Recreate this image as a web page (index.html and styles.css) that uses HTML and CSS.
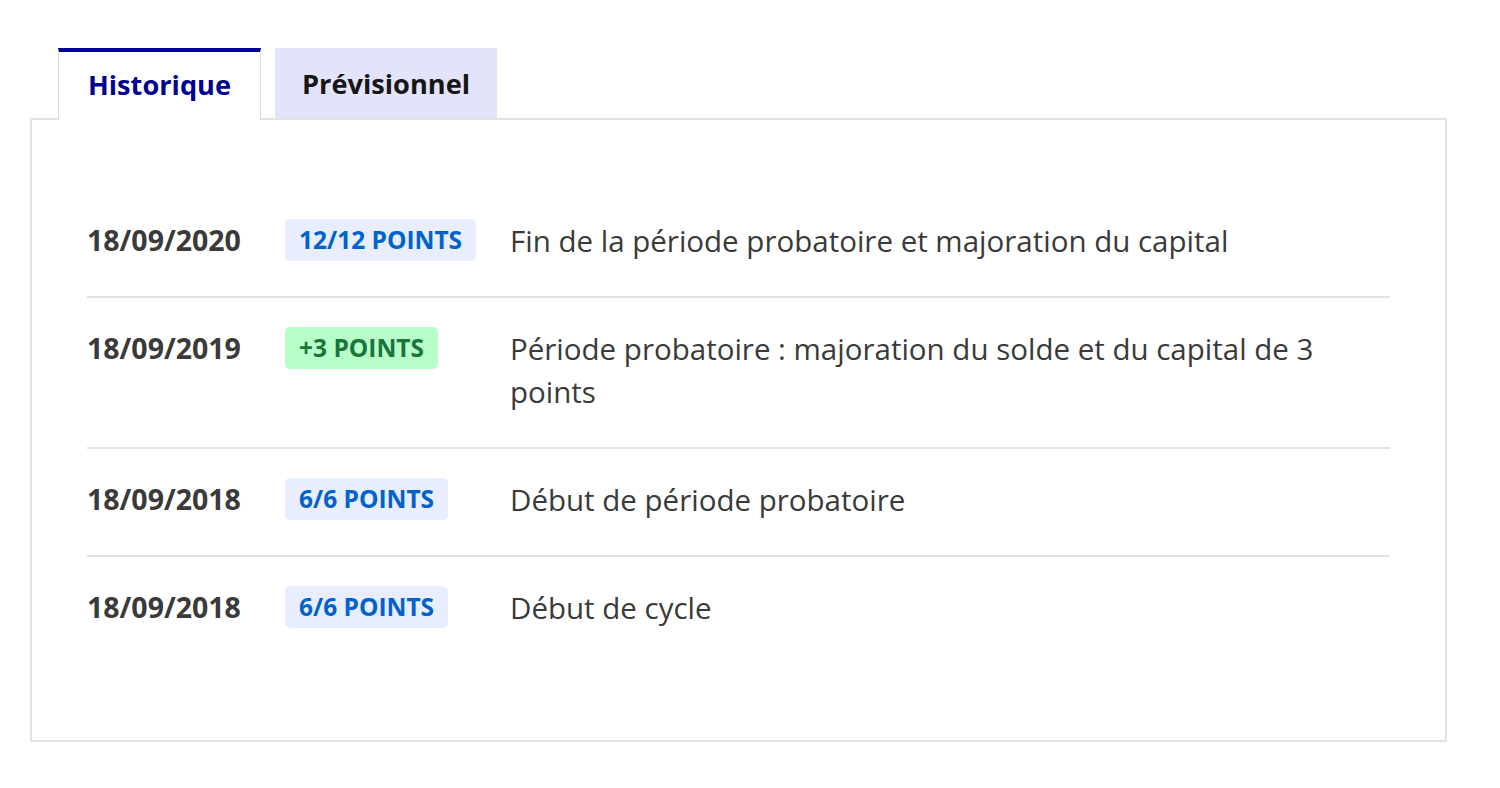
FILE: index.html
```html
<!DOCTYPE html>
<html lang="fr">
<head>
<meta charset="utf-8">
<title>Historique</title>
<link rel="stylesheet" href="styles.css">
</head>
<body>
<div class="tabs">
  <ul class="tab-list">
    <li><button class="tab tab-active">Historique</button></li>
    <li><button class="tab">Prévisionnel</button></li>
  </ul>
  <div class="panel">
    <div class="row">
      <div class="date">18/09/2020</div>
      <div class="badge-cell"><span class="badge badge-info">12/12 points</span></div>
      <div class="desc">Fin de la période probatoire et majoration du capital</div>
    </div>
    <div class="row">
      <div class="date">18/09/2019</div>
      <div class="badge-cell"><span class="badge badge-success">+3 points</span></div>
      <div class="desc">Période probatoire : majoration du solde et du capital de 3 points</div>
    </div>
    <div class="row">
      <div class="date">18/09/2018</div>
      <div class="badge-cell"><span class="badge badge-info">6/6 points</span></div>
      <div class="desc">Début de période probatoire</div>
    </div>
    <div class="row">
      <div class="date">18/09/2018</div>
      <div class="badge-cell"><span class="badge badge-info">6/6 points</span></div>
      <div class="desc">Début de cycle</div>
    </div>
  </div>
</div>
</body>
</html>
```
FILE: styles.css
```css
html, body {
  margin: 0;
  padding: 0;
  background: #ffffff;
}
body {
  font-family: "Open Sans", "Liberation Sans", sans-serif;
  color: #3a3a3a;
}
.tabs {
  padding: 48px 0 0 30px;
  width: 1417px;
}
.tab-list {
  list-style: none;
  margin: 0;
  padding: 0 0 0 28px;
  display: flex;
  gap: 14px;
  height: 70px;
}
.tab-list li {
  display: flex;
}
.tab {
  font-family: inherit;
  font-size: 27.2px;
  font-weight: 700;
  color: #161616;
  background: #e3e3fd;
  border: none;
  padding: 0 27px;
  height: 70px;
  margin: 0;
  cursor: pointer;
}
.tab-active {
  position: relative;
  z-index: 1;
  color: #000091;
  background: #ffffff;
  border-top: 4px solid #000091;
  border-left: 1px solid #dddddd;
  border-right: 1px solid #dddddd;
  height: 72px;
  padding: 0 29px 4px;
}
.panel {
  border: 2px solid #e3e3e3;
  padding: 70px 55px 77px;
}
.row {
  display: grid;
  grid-template-columns: 198px 225px 1fr;
  align-items: start;
  padding: 29px 0 34px;
  border-bottom: 2px solid #e3e3e3;
  line-height: 42px;
}
.row:last-child {
  border-bottom: none;
}
.date {
  font-size: 28.5px;
  font-weight: 700;
  color: #3a3a3a;
}
.badge-cell {
  display: flex;
  align-items: center;
  height: 42px;
}
.badge {
  display: inline-block;
  font-size: 24.5px;
  font-weight: 700;
  text-transform: uppercase;
  line-height: 42px;
  padding: 0 14px;
  border-radius: 5px;
}
.badge-info {
  background: #e8edff;
  color: #0063cb;
}
.badge-success {
  background: #b8fec9;
  color: #18753c;
}
.desc {
  font-size: 29.5px;
  line-height: 43px;
  color: #3a3a3a;
}
```
